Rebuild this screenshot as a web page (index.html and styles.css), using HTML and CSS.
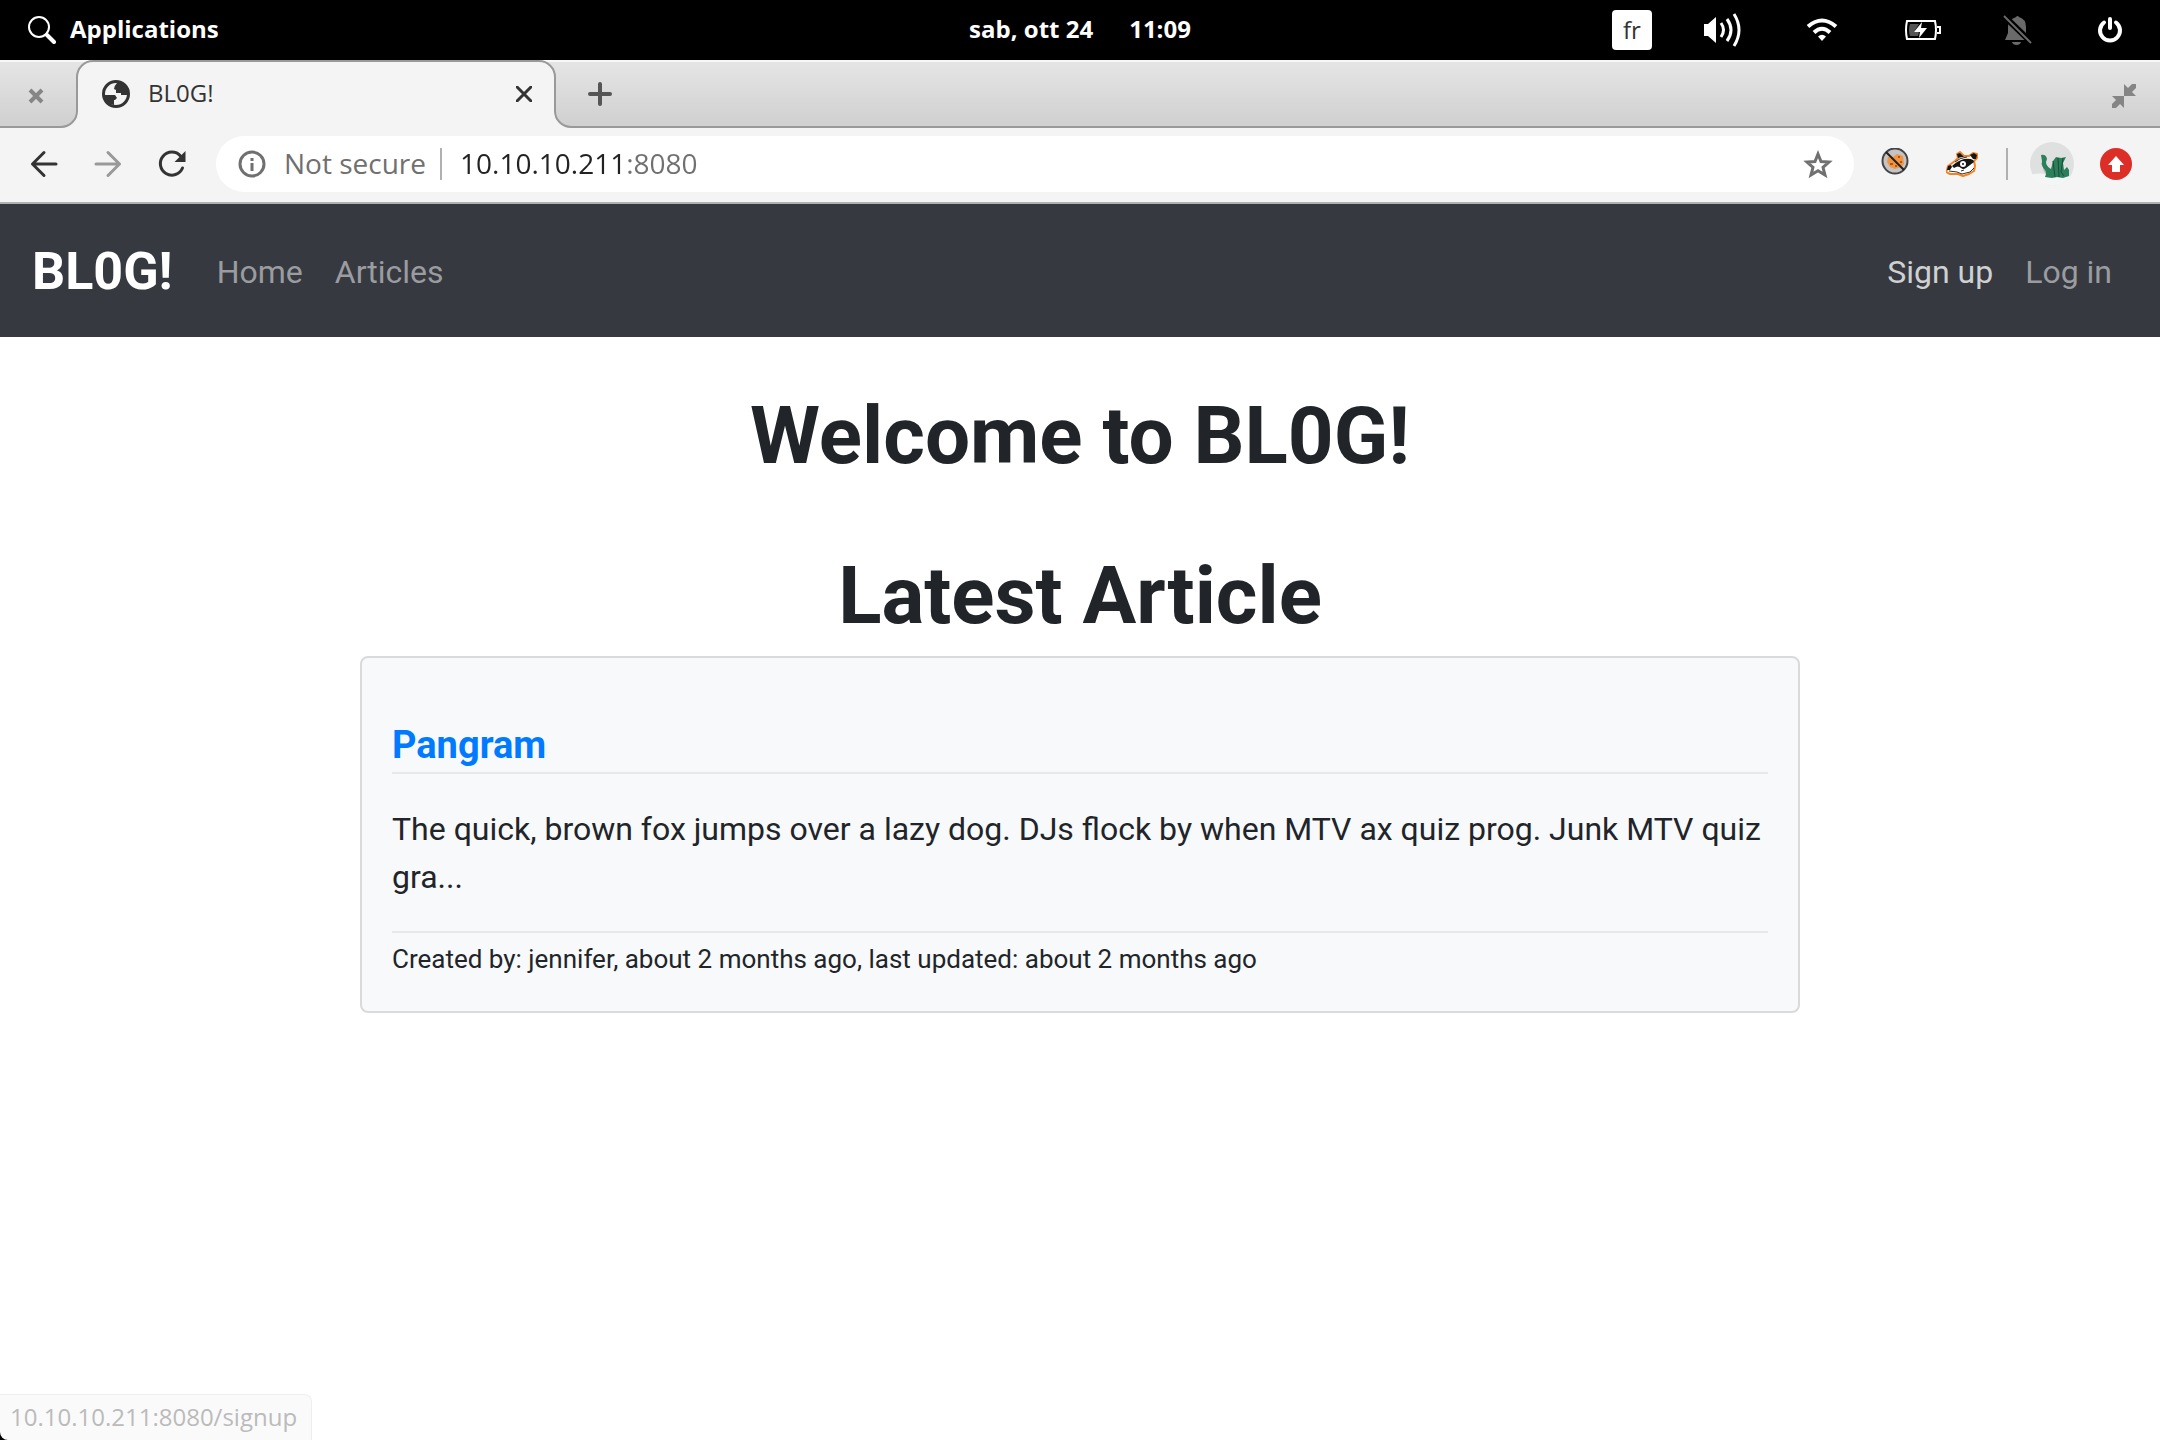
FILE: index.html
```html
<!DOCTYPE html>
<html lang="en">
<head>
<meta charset="utf-8">
<title>BL0G!</title>
<link rel="stylesheet" href="styles.css">
</head>
<body>
<header class="panel">
  <button class="panel-apps" type="button">
    <svg width="28" height="28" viewBox="0 0 28 28" fill="none" stroke="#fff" aria-hidden="true"><circle cx="11" cy="11" r="10" stroke-width="2"/><path d="M19 19l7 7" stroke-width="4" stroke-linecap="round"/></svg>
    <span class="panel-label">Applications</span>
  </button>
  <button class="panel-clock panel-label" type="button"><span>sab, ott 24</span><span>11:09</span></button>
  <div class="panel-indicators">
    <button class="keyboard" type="button">fr</button>
    <button class="indicator" type="button" aria-label="Volume">
      <svg width="40" height="36" viewBox="0 0 40 36" fill="none" stroke="#fff" stroke-width="3" aria-hidden="true"><path d="M2 12h4l8-7v26l-8-7H2z" fill="#fff" stroke="none"/><path d="M19 11q5 7 0 14M25 7q8 11 0 22M32 2q10 16 0 32"/></svg>
    </button>
    <button class="indicator" type="button" aria-label="Wi-Fi">
      <svg width="32" height="24" viewBox="0 0 32 24" fill="none" stroke="#fff" stroke-width="4" aria-hidden="true"><path d="M2 8.500Q16-3.500 30 8.500M8 14.500Q16 7 24 14.500"/><path d="M12 18.500Q16 15 20 18.500L16 23z" fill="#fff" stroke="none"/></svg>
    </button>
    <button class="indicator" type="button" aria-label="Battery">
      <svg width="39" height="20" viewBox="-3 0 39 20" aria-hidden="true"><path d="M2 1h28q2 9 0 18H2Q0 10 2 1z" fill="none" stroke="#fff" stroke-width="2"/><path d="M5 4h9l-5 8h5l-1 4H5q-2-6 0-12z" fill="#555"/><path d="M17 2l-8 10h6l-1 6 8-10h-6z" fill="#fff"/><path d="M32 7h3v6h-3" fill="none" stroke="#fff" stroke-width="2"/></svg>
    </button>
    <button class="indicator" type="button" aria-label="Notifications off">
      <svg width="28" height="30" viewBox="2 0 28 30" overflow="visible" aria-hidden="true"><path d="M13 2q1.500-2 3 0 7 2 7 10v6l4 7H2l3-7v-6Q5 5 13 2z" fill="#6a6a6a"/><path d="M9 27h9q-1 3-4.500 3T9 27z" fill="#6a6a6a"/><path d="M1 1l28 27" stroke="#000" stroke-width="6"/><path d="M1 1l27 27" stroke="#6a6a6a" stroke-width="2"/></svg>
    </button>
    <button class="indicator" type="button" aria-label="Power">
      <svg width="26" height="28" viewBox="0 0 26 28" fill="none" stroke="#fff" stroke-width="4" stroke-linecap="round" aria-hidden="true"><path d="M7 6.500a10 10 0 1 0 12 0M13 3v9"/></svg>
    </button>
  </div>
</header>

<div class="tabs">
  <button class="tab-behind" type="button" aria-label="Close previous tab">
    <svg width="16" height="16" viewBox="0 0 16 16" aria-hidden="true"><path d="M2 2l12 12M14 2L2 14" stroke="#858585" stroke-width="4"/></svg>
  </button>
  <svg width="32" height="68" viewBox="0 0 32 68" aria-hidden="true"><path d="M0 67a16 16 0 0 0 16-16V17a16 16 0 0 1 16-16V68H0z" fill="#f4f4f4"/><path d="M0 67a16 16 0 0 0 16-16V17a16 16 0 0 1 16-16" fill="none" stroke="#999" stroke-width="2"/></svg>
  <div class="tab">
    <svg width="28" height="28" viewBox="0 0 28 28" aria-hidden="true"><circle cx="14" cy="14" r="12.500" fill="#f4f4f4" stroke="#333" stroke-width="3"/><path d="M15 3q-3 3-3 6l2 1v3h5v2h6q3-8-4-11-3-2-6-1zM2 15h11l2 3-2 2h-1v5q-9-1-10-10z" fill="#333"/></svg>
    <span class="tab-title">BL0G!</span>
    <button class="icon-button" type="button" aria-label="Close tab">
      <svg width="16" height="16" viewBox="0 0 16 16" aria-hidden="true"><path d="M1 1l14 14M15 1L1 15" stroke="#333" stroke-width="3" stroke-linecap="round"/></svg>
    </button>
  </div>
  <svg width="32" height="68" viewBox="0 0 32 68" aria-hidden="true"><path d="M0 1a16 16 0 0 1 16 16V51a16 16 0 0 0 16 16V68H0z" fill="#f4f4f4"/><path d="M0 1a16 16 0 0 1 16 16V51a16 16 0 0 0 16 16" fill="none" stroke="#999" stroke-width="2"/></svg>
  <div class="tabs-rest">
    <button class="icon-button" type="button" aria-label="New tab">
      <svg width="24" height="24" viewBox="0 0 24 24" aria-hidden="true"><path d="M2 12h20M12 2v20" stroke="#555" stroke-width="4" stroke-linecap="round"/></svg>
    </button>
    <button class="icon-button restore" type="button" aria-label="Restore window">
      <svg width="24" height="24" viewBox="0 0 24 24" fill="#858585" aria-hidden="true"><path d="M12 0v12h12l-4-4 4-4a2 2 0 0 0-4-4l-4 4zM12 24V12H0l4 4-4 4a2 2 0 0 0 4 4l4-4z"/></svg>
    </button>
  </div>
</div>

<div class="toolbar">
  <button class="icon-button" type="button" aria-label="Back">
    <svg width="28" height="28" viewBox="0 0 28 28" fill="none" stroke="#333" stroke-width="3" stroke-linecap="round" stroke-linejoin="round" aria-hidden="true"><path d="M26 14H2.500M14 2.500L2.500 14 14 25.500"/></svg>
  </button>
  <button class="icon-button" type="button" aria-label="Forward">
    <svg width="28" height="28" viewBox="0 0 28 28" fill="none" stroke="#999" stroke-width="3" stroke-linecap="round" stroke-linejoin="round" aria-hidden="true"><path d="M2 14h23.500M14 2.500L25.500 14 14 25.500"/></svg>
  </button>
  <button class="icon-button" type="button" aria-label="Reload">
    <svg width="28" height="28" viewBox="0 0 28 28" aria-hidden="true"><path d="M22.500 6A11.500 11.500 0 1 0 24.500 18" fill="none" stroke="#333" stroke-width="3" stroke-linecap="round"/><path d="M27.500 1v11h-11z" fill="#333"/></svg>
  </button>
  <div class="omnibox">
    <svg width="28" height="28" viewBox="0 0 28 28" aria-hidden="true"><circle cx="14" cy="14" r="12" fill="none" stroke="#707070" stroke-width="3"/><path d="M12.500 8h3v3h-3zM12.500 13h3v8h-3z" fill="#707070"/></svg>
    <label class="security" for="address">Not secure</label>
    <span class="divider"></span>
    <input class="address" id="address" type="text" value="10.10.10.211:8080">
    <button class="icon-button" type="button" aria-label="Bookmark">
      <svg width="30" height="28" viewBox="0 0 30 28" aria-hidden="true"><path d="M15 4l3 7.500 8 .6-6 5.200 2 7.700-7-4.200L8 25l2-7.700-6-5.200 8-.6z" fill="none" stroke="#707070" stroke-width="3"/></svg>
    </button>
  </div>
  <div class="extensions">
    <button class="icon-button ext-cookie" type="button" aria-label="Cookie blocker">
      <svg width="32" height="32" viewBox="0 0 32 32" aria-hidden="true"><circle cx="15" cy="13" r="12.500" fill="#c4c4c4" stroke="#454545" stroke-width="2"/><path d="M8 9l3-1 2 1 4-3 6 2 1 8-3 3-6 2-5-2-3-5z" fill="#f39440"/><path d="M11 9h2v2h-2zM18 8h2v2h-2zM20 13h2v2h-2zM10 15h3v2h-3zM15 17h2v2h-2z" fill="#a85a20"/><path d="M6 4l18 18" stroke="#222" stroke-width="2"/></svg>
    </button>
    <button class="icon-button ext-badger" type="button" aria-label="Badger">
      <svg width="32" height="28" viewBox="0 0 32 28" stroke-linejoin="round" aria-hidden="true"><path d="M1 20l1-4 7-5 3-3-1-4 3-2 4 4h5l4-3 4 1v4l-3 3 1 5-1 5-5 3-6 2-5-2-8 0-4-2z" fill="#fff" stroke="#f58220" stroke-width="2"/><path d="M1 20l1-4 3-1 1 2-2 3zM12 8l-1-4 3-1 4 4q-3 0-6 1zM24 5l4-2 3 2-1 4-3 0zM6 16q5-5 12-7 6-1 9 1l1 2q-4 3-8 6-3 2-5 0-3-3-7 0z" fill="#151515"/><circle cx="17" cy="14" r="3" fill="#fff"/><circle cx="17" cy="14" r="1" fill="#151515"/><path d="M3 21l8 1 5 2 8-2 4-4M9 12q4-4 12-5M15 21l3-1" stroke="#333" stroke-width="1" fill="none"/></svg>
    </button>
    <span class="divider"></span>
    <button class="avatar" type="button" aria-label="Profile">
      <svg width="44" height="44" viewBox="0 0 44 44" aria-hidden="true"><circle cx="22" cy="22" r="22" fill="#dfe1e1"/><path d="M0 33q12-4 22 2 10 1 18-1-6 10-18 10Q7 43 0 33z" fill="#f4f5f5"/><path d="M11 21q6 1 5 6l5 5-2 2q-6-3-6-9l-2-3z" fill="#b0bbb6"/><path d="M11 13q5-1 6 4l-1 3q0 4 5 7l2-8 3-4 5 1 5-1-3 6 1 7 3-3 2 3v6l-6 2-6-1-5 1-7-1q2-4 0-7-4-4-3-9z" fill="#2b7f5b"/><path d="M23 19l2 16M28 16l1 19M33 16l-2 14 3 4" fill="none" stroke="#174f38" stroke-width="1"/></svg>
    </button>
    <button class="icon-button" type="button" aria-label="Update">
      <svg width="32" height="32" viewBox="0 0 32 32" aria-hidden="true"><circle cx="16" cy="16" r="16" fill="#dc2d27"/><path d="M16 8l8 9h-4v7h-8v-7H8z" fill="#fff"/></svg>
    </button>
  </div>
</div>

<div class="page">
  <nav class="navbar">
    <a class="brand" href="#">BL0G!</a>
    <a class="nav-link" href="#">Home</a>
    <a class="nav-link" href="#">Articles</a>
    <a class="nav-link nav-link-hover nav-right" href="#">Sign up</a>
    <a class="nav-link" href="#">Log in</a>
  </nav>
  <main class="content">
    <h1 class="heading">Welcome to BL0G!</h1>
    <h1 class="heading">Latest Article</h1>
    <article class="card">
      <h2 class="card-title"><a href="#">Pangram</a></h2>
      <p class="card-text">The quick, brown fox jumps over a lazy dog. DJs flock by when MTV ax quiz prog. Junk MTV quiz gra...</p>
      <p class="card-meta">Created by: jennifer, about 2 months ago, last updated: about 2 months ago</p>
    </article>
  </main>
  <div class="corner"></div>
  <div class="status">10.10.10.211:8080/signup</div>
</div>
</body>
</html>
```
FILE: styles.css
```css
* { box-sizing: border-box; }

body {
  margin: 0;
  min-height: 100vh;
  display: flex;
  flex-direction: column;
  background: #fff;
  color: #212529;
  font-family: Roboto, sans-serif;
  font-size: 32px;
  line-height: 48px;
}

a { text-decoration: none; }
svg { display: block; flex: none; }

button {
  margin: 0;
  padding: 0;
  border: 0;
  background: none;
  color: inherit;
  font: inherit;
}

/* Desktop panel */
.panel {
  display: grid;
  grid-template-columns: 1fr auto 1fr;
  align-items: center;
  height: 60px;
  padding: 0 28px;
  background: #000;
  color: #fff;
  font-family: "Open Sans", sans-serif;
  font-size: 24px;
  font-weight: 700;
  line-height: 32px;
}
.panel-label { padding-bottom: 2px; }
.panel-apps { display: flex; align-items: center; gap: 14px; justify-self: start; }
.panel-clock { display: flex; gap: 36px; }
.panel-indicators {
  display: flex;
  align-items: center;
  justify-content: flex-end;
  gap: 64px;
  padding-right: 9px;
}
.keyboard {
  width: 40px;
  height: 40px;
  margin-right: -14px;
  border-radius: 4px;
  background: #fff;
  color: #333;
  font-weight: 400;
}

/* Tab strip */
.tabs {
  display: flex;
  height: 68px;
  background: linear-gradient(#f8f8f8 0 2px, #e5e5e5 2px, #cfcfcf);
  font-family: "Open Sans", sans-serif;
}
.tab-behind {
  display: flex;
  align-items: center;
  width: 61px;
  padding: 6px 0 0 28px;
  border-bottom: 2px solid #999;
}
.tab {
  display: flex;
  align-items: center;
  width: 446px;
  padding: 0 7px 2px 9px;
  border-top: 2px solid #999;
  background: #f4f4f4;
  color: #333;
  font-size: 24px;
}
.tab-title { flex: 1; padding: 0 0 2px 18px; }
.tabs-rest {
  flex: 1;
  display: flex;
  align-items: center;
  justify-content: space-between;
  padding: 2px 24px 0 17px;
  border-bottom: 2px solid #999;
}
.restore { padding-top: 4px; }

/* Toolbar */
.toolbar {
  display: flex;
  align-items: center;
  gap: 36px;
  height: 76px;
  padding: 0 28px 2px 30px;
  border-bottom: 2px solid #b0b0b0;
  background: #f4f4f4;
  font-family: "Open Sans", sans-serif;
  font-size: 28px;
}
.omnibox {
  flex: 1;
  display: flex;
  align-items: center;
  height: 56px;
  margin-left: -6px;
  padding: 0 21px 0 22px;
  border-radius: 28px;
  background: #fff;
}
.security { padding: 0 14px 2px 18px; color: #707070; }
.divider { width: 2px; height: 32px; background: #b0b0b0; }
.address {
  flex: 1;
  min-width: 0;
  padding: 0 0 2px 18px;
  border: 0;
  outline: 0;
  background: linear-gradient(90deg, #222 184px, #707070 184px);
  background-clip: text;
  -webkit-background-clip: text;
  color: transparent;
  font: inherit;
  line-height: 48px;
}
.extensions { display: flex; align-items: center; gap: 26px; margin-left: -10px; }
.ext-cookie { margin-right: 8px; }
.ext-badger { margin-right: 2px; }
.avatar { margin-left: -4px; }

/* Web page */
.page { position: relative; flex: 1; }
.navbar {
  display: flex;
  align-items: center;
  gap: 32px;
  min-height: 133px;
  padding: 2px 48px 0 32px;
  background: #363940;
}
.brand {
  padding-right: 12px;
  color: #fff;
  font-size: 52px;
  font-weight: 700;
}
.nav-link { color: #9a9c9f; }
.nav-link-hover { color: #ced0d1; }
.nav-right { margin-left: auto; }

.content {
  width: 100%;
  max-width: 1440px;
  margin: 0 auto;
  padding-top: 51px;
}
.heading {
  margin: 0 0 64px;
  font-size: 80px;
  font-weight: 700;
  line-height: 96px;
  text-align: center;
}
.heading + .heading { margin-bottom: 12px; }

.card {
  padding: 64px 30px 32px;
  border: 2px solid #d9dadb;
  border-radius: 8px;
  background: #f8f9fb;
}
.card-title {
  margin: 0 0 31px;
  padding-bottom: 4px;
  border-bottom: 2px solid #e7e8ea;
  font-size: 38px;
  font-weight: 700;
  line-height: 46px;
}
.card-title a { color: #007bff; }
.card-text { margin: 0; padding-bottom: 30px; border-bottom: 2px solid #e7e8ea; }
.card-meta { margin: 0; padding: 6px 0 0; font-size: 26px; line-height: 40px; }

/* Link target shown over the foot of the page */
.status {
  position: absolute;
  left: 0;
  bottom: 0;
  height: 46px;
  padding: 0 14px 0 10px;
  border: 1px solid #eee;
  border-width: 1px 1px 0 0;
  border-radius: 0 8px 0 8px;
  background: #fafafa;
  color: #bbb;
  font-family: "Open Sans", sans-serif;
  font-size: 24px;
  line-height: 44px;
}
.corner {
  position: absolute;
  left: 0;
  bottom: 0;
  width: 8px;
  height: 8px;
  background: #000;
}
```
